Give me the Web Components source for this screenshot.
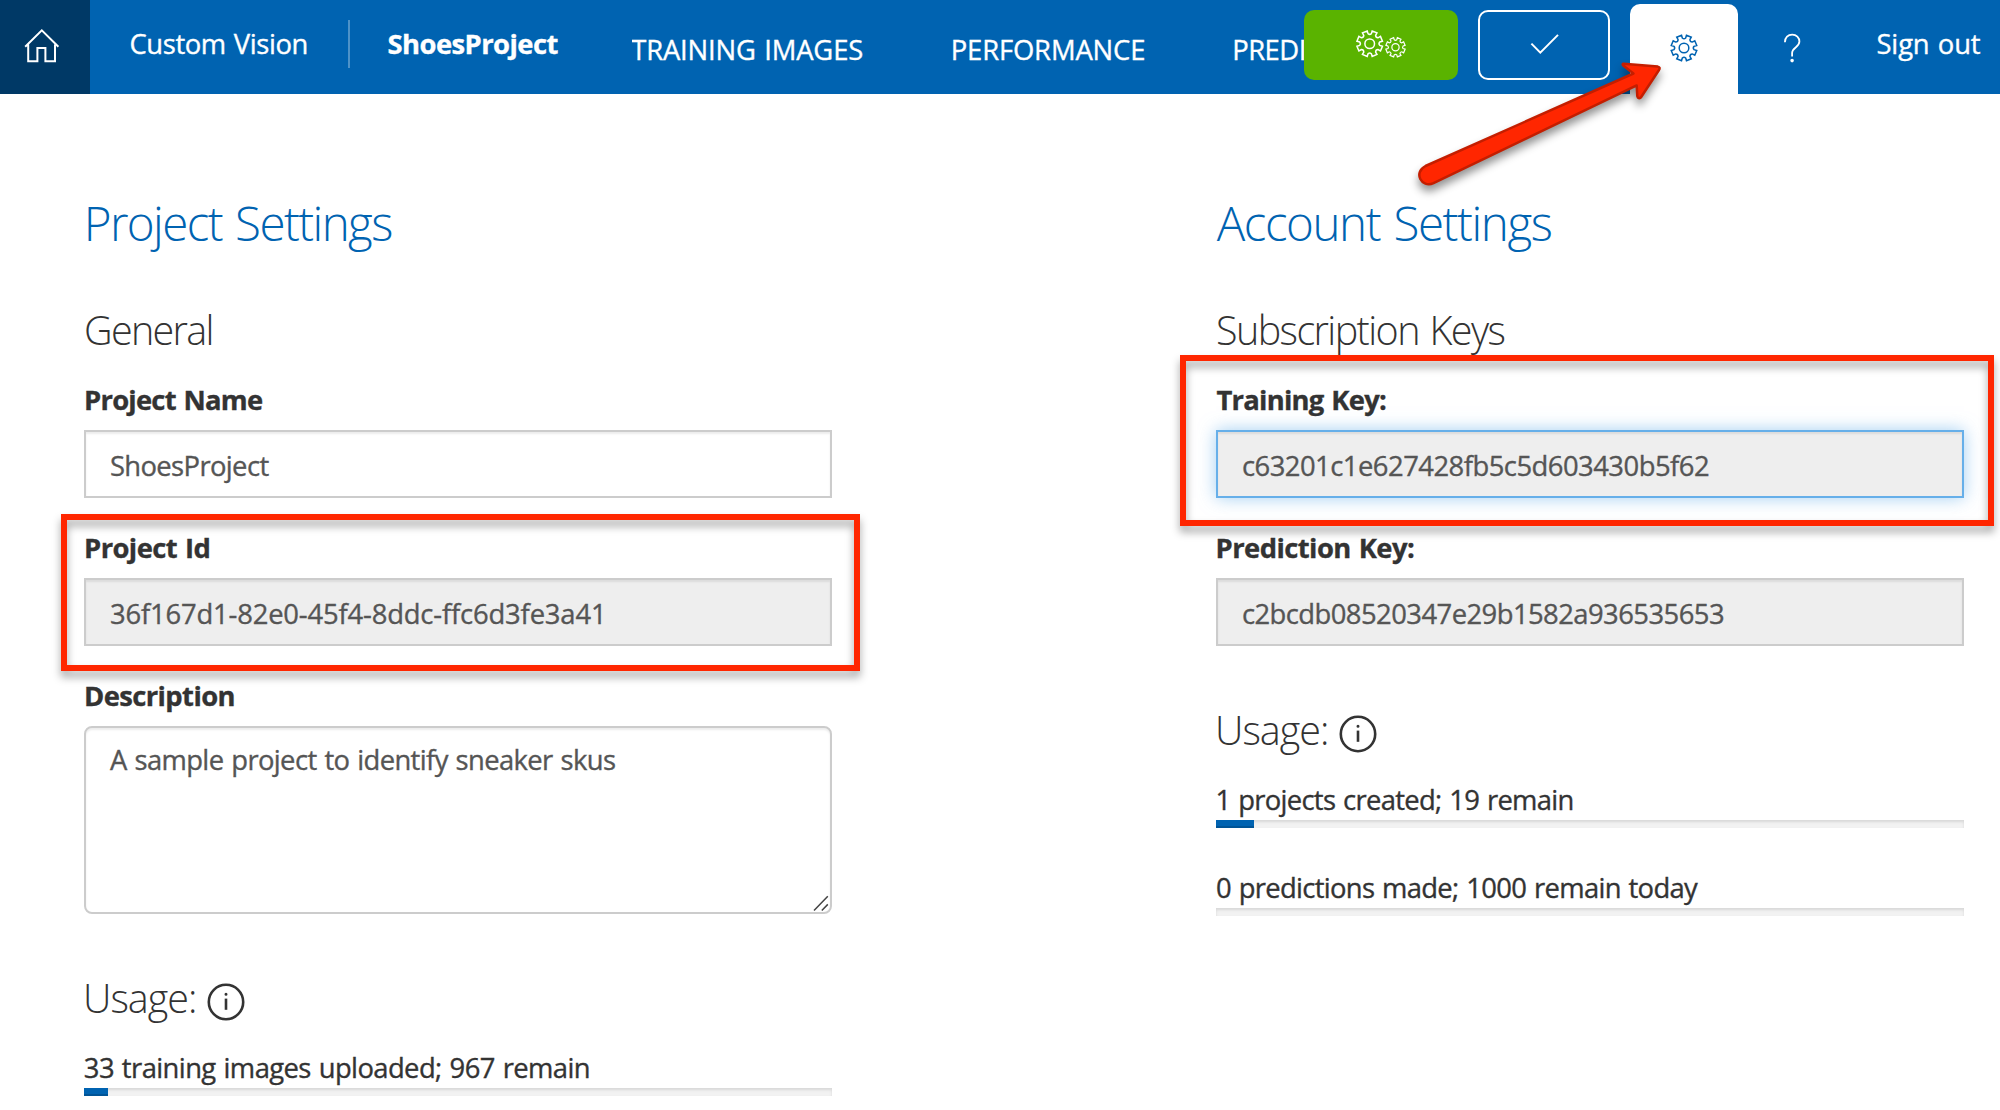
<!DOCTYPE html>
<html lang="en">
<head>
<meta charset="utf-8">
<title>Custom Vision - Project Settings</title>
<style>
  html, body { margin: 0; background: #fff; }
  body { font-family: "Open Sans", "Noto Sans", sans-serif; color: #333; width: 2000px; height: 1110px; overflow: hidden; }
</style>
</head>
<body>
<settings-page></settings-page>
<script>
const define = (name, html, setup) => {
  const tpl = document.createElement('template');
  tpl.innerHTML = html;
  customElements.define(name, class extends HTMLElement {
    connectedCallback() {
      if (this.shadowRoot) return;
      this.attachShadow({ mode: 'open' }).append(tpl.content.cloneNode(true));
      if (setup) setup(this, this.shadowRoot);
    }
  });
};

/* One line of text, tracked so that its ink fills the width given in "w"; "nudge" shifts its start. */
const ctx = document.createElement('canvas').getContext('2d');
define('ui-text', `
  <style>
    :host { display: block; flex: none; font-size: 27.4px; line-height: 40px; height: 40px; white-space: nowrap; -webkit-text-stroke: .35px currentColor; }
    :host([kind=title]) { font-size: 47.5px; line-height: 65px; height: 64px; font-weight: 300; color: #0063b1; -webkit-text-stroke-width: 0; }
    :host([kind=section]) { font-size: 39.5px; line-height: 56px; height: 54px; font-weight: 300; -webkit-text-stroke-width: 0; }
    :host([kind=label]) { font-weight: 700; }
    span { display: block; font-variant-ligatures: none; }
  </style><span><slot></slot></span>`, (el, root) => {
  const w = +el.getAttribute('w');
  const text = el.textContent;
  const cs = getComputedStyle(el);
  ctx.font = `${cs.fontWeight} ${cs.fontSize} "Open Sans"`;
  const m = ctx.measureText(text);
  const gap = parseFloat(cs.fontSize) * .05;
  const ink = m.actualBoundingBoxRight + m.actualBoundingBoxLeft + gap * (text.split(' ').length - 1);
  const span = root.querySelector('span');
  span.style.wordSpacing = gap + 'px';
  span.style.letterSpacing = ((w - ink) / (text.length - 1)) + 'px';
  span.style.marginLeft = m.actualBoundingBoxLeft + (+el.getAttribute('nudge') || 0) + 'px';
  el.style.width = w + 'px';
});

/* Eight-toothed cog outline. */
const cog = (cx, cy, r) => {
  const pt = (deg, k) => {
    const a = deg * Math.PI / 180;
    return (cx + Math.sin(a) * r * k).toFixed(2) + ' ' + (cy - Math.cos(a) * r * k).toFixed(2);
  };
  let d = '';
  for (let i = 0; i < 8; i++) {
    const c = 22.5 + i * 45;
    d += (i ? 'L' : 'M') + pt(c - 13, .76) + 'L' + pt(c - 11.5, .97) + 'L' + pt(c + 11.5, .97) + 'L' + pt(c + 13, .76) + 'Q' + pt(c + 22.5, .64) + ' ' + pt(c + 32, .76);
  }
  return `<path d="${d}Z"/><circle cx="${cx}" cy="${cy}" r="${r * .36}"/>`;
};
const icons = {
  home: [40, 40, 2, `<path d="M2.2 20.8 18.8 4.4 35.4 20.8M5.2 18.5V35.3H14.4V22H22.4V35.3H32V18.5"/>`],
  gears: [56, 36, 1.5, cog(16.7, 17.7, 13.4) + `<g stroke-width="1.2">${cog(42.5, 21.3, 10.1)}</g>`],
  gear: [30, 30, 1.5, cog(15, 15, 13.4)],
  check: [32, 24, 2, `<path d="M2.4 11.6 11.3 20.6 29 2.9"/>`],
  help: [20, 32, 1.8, `<path d="M2.9 10.2C2.9 5.6 6 2.6 10.2 2.6S17.4 5.6 17.4 9.6C17.4 15.4 10.1 15.6 10.1 21V24.6"/><circle cx="10.1" cy="28.6" r=".9" fill="currentColor"/>`],
  info: [38, 38, 2.6, `<circle cx="19" cy="19" r="17.2"/><path d="M19 15.6V26.8"/><circle cx="19" cy="11.3" r=".8" fill="currentColor" stroke-width="1.4"/>`],
  grip: [18, 18, 1.5, `<path d="M2 16.5 15.8 2.2M9.8 16.5 15.8 10.4"/>`]
};
define('ui-icon', `<style>:host { display: block; flex: none; } svg { display: block; }</style>`, (el, root) => {
  const [w, h, s, body] = icons[el.getAttribute('name')];
  const box = document.createElement('div');
  box.innerHTML = `<svg width="${w}" height="${h}" viewBox="0 0 ${w} ${h}" fill="none" stroke="currentColor" stroke-width="${s}">${body}</svg>`;
  root.append(box.firstChild);
});

define('top-bar', `
  <style>
    :host { display: flex; height: 94px; background: #0063b1; color: #fff; align-items: flex-start; }
    .home { width: 90px; height: 94px; background: #003966; flex: none; display: flex; box-sizing: border-box; padding: 25.5px 0 0 23px; }
    .row { padding-top: 24px; }
    .brand { margin-left: 40.5px; }
    .rule { width: 2px; height: 48px; margin: 20px 0 0 41px; background: #4d92c8; flex: none; }
    .project { margin-left: 38.5px; }
    nav { display: flex; gap: 90px; width: 672px; margin-left: 74.5px; padding-top: 30px; overflow: hidden; flex: none; }
    .btn { box-sizing: border-box; height: 70px; margin-top: 10px; border-radius: 10px; flex: none; display: flex; }
    .train { width: 154px; background: #5ab300; padding: 16px 0 0 49px; }
    .test { width: 132px; margin-left: 20px; border: 2px solid #fff; padding: 20px 0 0 49px; }
    .tab { box-sizing: border-box; width: 108px; height: 90px; margin: 4px 0 0 20px; border-radius: 10px 10px 0 0; background: #fff; color: #0063b1; flex: none; padding: 28.7px 0 0 39.2px; }
    .help { margin: 32px 0 0 44px; }
    .out { margin-left: 74.5px; }
  </style>
  <div class="home"><ui-icon name="home"></ui-icon></div>
  <ui-text class="row brand" w="176">Custom Vision</ui-text>
  <div class="rule" style="margin-left:41.5px"></div>
  <ui-text class="row project" kind="label" w="169">ShoesProject</ui-text>
  <nav>
    <ui-text w="231" nudge="-.8">TRAINING IMAGES</ui-text>
    <ui-text w="191.5" nudge="-.3">PERFORMANCE</ui-text>
    <ui-text w="165" nudge="-.3">PREDICTIONS</ui-text>
  </nav>
  <div class="btn train"><ui-icon name="gears"></ui-icon></div>
  <div class="btn test"><ui-icon name="check"></ui-icon></div>
  <div class="tab"><ui-icon name="gear"></ui-icon></div>
  <ui-icon class="help" name="help"></ui-icon>
  <ui-text class="row out" w="103.3" nudge="1">Sign out</ui-text>`);

define('ui-field', `
  <style>
    :host { display: flex; flex-direction: column; gap: 10px; position: relative; }
    ui-text { margin-left: 2px; }
    .box { box-sizing: border-box; height: 68px; border: 2px solid #ccc; background: #fff; color: #555; padding: 14px 0 0 24.9px; box-shadow: inset 0 2px 2px rgba(0,0,0,.075); display: flex; }
    :host([readonly]) .box { background: #eee; }
    :host([focused]) .box { border-color: #66afe9; box-shadow: inset 0 2px 2px rgba(0,0,0,.075), 0 0 16px rgba(102,175,233,.6); }
    :host([multiline]) .box { height: 188px; border-radius: 8px; padding-top: 12px; justify-content: space-between; }
    ui-icon { display: none; align-self: flex-end; color: #444; }
    :host([multiline]) ui-icon { display: block; }
  </style>
  <ui-text kind="label"></ui-text>
  <div class="box"><slot></slot><ui-icon name="grip"></ui-icon></div>
  <slot name="callout"></slot>`, (el, root) => {
  const label = root.querySelector('ui-text');
  const fresh = document.createElement('ui-text');
  fresh.setAttribute('kind', 'label');
  fresh.setAttribute('w', el.getAttribute('label-w'));
  fresh.setAttribute('nudge', el.getAttribute('label-nudge') || 0);
  fresh.textContent = el.getAttribute('label');
  label.replaceWith(fresh);
});

/* Red frame drawn around a field. */
define('call-out', `
  <style>
    :host { display: block; position: absolute; z-index: 2; box-sizing: border-box; border: 6px solid #ff2600; filter: drop-shadow(0 6px 4px rgba(0,0,0,.36)); }
  </style>`);

define('usage-meter', `
  <style>
    :host { display: flex; flex-direction: column; }
    .track { height: 8px; background: #f2f2f2; box-shadow: inset 0 2px 3px rgba(0,0,0,.11); }
    .fill { height: 8px; background: #0063b1; box-shadow: inset 0 -2px 0 rgba(0,0,0,.15); }
  </style>
  <slot></slot>
  <div class="track"><div class="fill"></div></div>`, (el, root) => {
  root.querySelector('.fill').style.width = el.getAttribute('fill') + 'px';
});

define('usage-block', `
  <style>
    :host { display: block; margin-top: 56px; }
    .head { display: flex; gap: 11.5px; padding-left: 2px; margin-bottom: 24px; }
    ui-icon { margin-top: 13px; }
    .meters { display: flex; flex-direction: column; gap: 40px; }
  </style>
  <div class="head"><ui-text kind="section" w="109">Usage:</ui-text><ui-icon name="info"></ui-icon></div>
  <div class="meters"><slot></slot></div>`);

define('settings-column', `
  <style>
    :host { display: block; }
    ::slotted([slot=section]) { margin-top: 48px; margin-left: 2px; }
    ::slotted([slot=title]) { margin-left: 3px; }
    .fields { display: flex; flex-direction: column; gap: 30px; margin-top: 24px; }
  </style>
  <slot name="title"></slot>
  <slot name="section"></slot>
  <div class="fields"><slot name="field"></slot></div>
  <slot></slot>`);

define('pointer-arrow', `
  <style>:host { display: block; position: absolute; left: 1400px; top: 40px; z-index: 3; } svg { display: block; overflow: visible; filter: drop-shadow(0 6px 4px rgba(0,0,0,.42)); }</style>
  <svg width="270" height="160" viewBox="1400 40 270 160">
    <path d="M1623.5 63.8 1657.8 66.6Q1660.6 67.2 1659 70L1641 97.2Q1638.2 99.6 1637.3 96.2L1636.7 85.4 1433.5 183.2C1421.5 188.5 1413 172.5 1425.5 166L1633.4 73.5 1623.2 65.6Q1622 63.8 1623.5 63.8Z" fill="#ff2600" stroke="#c41e00" stroke-width="2.5" stroke-linejoin="round"/>
  </svg>`);

define('settings-page', `
  <style>
    :host { display: block; position: relative; height: 1110px; overflow: hidden; }
    main { display: grid; grid-template-columns: 748px 748px; column-gap: 384px; padding: 96px 0 0 84px; }
    .id { left: -23.5px; top: -14px; width: 799px; height: 157px; }
    .key { left: -36.5px; top: -25px; width: 814.5px; height: 171px; }
  </style>
  <top-bar></top-bar>
  <main>
    <settings-column>
      <ui-text slot="title" kind="title" w="303.5" nudge=".7">Project Settings</ui-text>
      <ui-text slot="section" kind="section" w="125.5">General</ui-text>
      <ui-field slot="field" label="Project Name" label-w="176"><ui-text w="158.5">ShoesProject</ui-text></ui-field>
      <ui-field slot="field" label="Project Id" label-w="123.5" readonly><ui-text w="490">36f167d1-82e0-45f4-8ddc-ffc6d3fe3a41</ui-text><call-out slot="callout" class="id"></call-out></ui-field>
      <ui-field slot="field" label="Description" label-w="147.5" multiline><ui-text w="505" nudge="-1">A sample project to identify sneaker skus</ui-text></ui-field>
      <usage-block>
        <usage-meter fill="24"><ui-text w="504" nudge=".8">33 training images uploaded; 967 remain</ui-text></usage-meter>
      </usage-block>
    </settings-column>
    <settings-column>
      <ui-text slot="title" kind="title" w="334" nudge="-2.3">Account Settings</ui-text>
      <ui-text slot="section" kind="section" w="286.5">Subscription Keys</ui-text>
      <ui-field slot="field" label="Training Key:" label-w="169.5" label-nudge="-1.5" readonly focused><ui-text w="466">c63201c1e627428fb5c5d603430b5f62</ui-text><call-out slot="callout" class="key"></call-out></ui-field>
      <ui-field slot="field" label="Prediction Key:" label-w="196.5" label-nudge="-.5" readonly><ui-text w="481">c2bcdb08520347e29b1582a936535653</ui-text></ui-field>
      <usage-block>
        <usage-meter fill="38"><ui-text w="355" nudge="1.5">1 projects created; 19 remain</ui-text></usage-meter>
        <usage-meter fill="0"><ui-text w="481" nudge="1">0 predictions made; 1000 remain today</ui-text></usage-meter>
      </usage-block>
    </settings-column>
  </main>
  <pointer-arrow></pointer-arrow>`);
</script>
</body>
</html>
